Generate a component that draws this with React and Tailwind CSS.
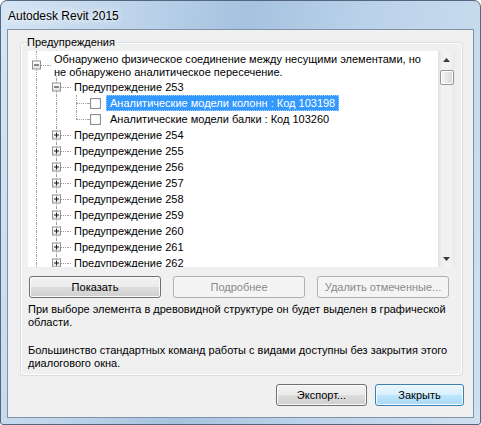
import React from "react"

const dot = "border-dotted border-[#a0a0a0]"

// one 20px indentation column of the tree, with its guide lines
const Col = ({ up, down, right, box }) => (
  <div className="relative w-5 shrink-0 self-stretch">
    {up && <div className={`absolute left-[8px] top-0 h-1/2 border-l ${dot}`} />}
    {down && <div className={`absolute left-[8px] top-1/2 bottom-0 border-l ${dot}`} />}
    {right && <div className={`absolute left-[8px] right-0 top-1/2 border-t ${dot}`} />}
    {box && (
      <div className="absolute left-[4px] top-1/2 -translate-y-1/2 w-[9px] h-[9px] border border-[#919191] bg-[linear-gradient(#ffffff,#e3e3e3)] flex items-center justify-center">
        <div className="relative w-[5px] h-[5px] flex items-center justify-center">
          <div className="w-[5px] h-px bg-[#1e1e1e]" />
          {box === "plus" && <div className="absolute left-[2px] top-0 w-px h-[5px] bg-[#1e1e1e]" />}
        </div>
      </div>
    )}
  </div>
)

const Ext = ({ w = 3 }) => (
  <div className="relative shrink-0 self-stretch" style={{ width: w }}>
    <div className={`absolute left-0 right-0 top-1/2 border-t ${dot}`} />
  </div>
)

const Checkbox = () => (
  <div className="w-[11px] h-[11px] shrink-0 border border-[#8e8f8f] bg-white shadow-[inset_0_0_0_1px_#f2f2f2]" />
)

const Warning = ({ n }) => (
  <div className="flex h-4 shrink-0 items-center leading-4">
    <Col up down />
    <Col up down right box="plus" />
    <Ext />
    <span className="pl-[3px] whitespace-nowrap">Предупреждение {n}</span>
  </div>
)

const Button = ({ children, kind = "normal", className = "" }) => {
  const styles = {
    normal:
      "border-[#707070] bg-[linear-gradient(#f2f2f2_0%,#ebebeb_50%,#dddddd_50%,#cfcfcf_100%)] shadow-[inset_0_0_0_1px_#fbfbfb] text-black",
    disabled: "border-[#adb2b5] bg-[#f4f4f4] text-[#8a8a8a]",
    primary:
      "border-[#3c7fb1] bg-[linear-gradient(#eaf6fd_0%,#d9f0fc_50%,#bee6fd_50%,#a7d9f5_100%)] shadow-[inset_0_0_0_1px_#f4fbff] text-black",
  }
  return (
    <div
      className={`h-[22px] rounded-[3px] border flex items-center justify-center whitespace-nowrap ${styles[kind]} ${className}`}
    >
      {children}
    </div>
  )
}

const Scrollbar = () => (
  <div className="w-[17px] shrink-0 flex flex-col items-center bg-[linear-gradient(to_right,#e2e2e2,#f1f1f1_25%,#f1f1f1_75%,#e9e9e9)]">
    <div className="h-[17px] w-full flex items-center justify-center">
      <svg width="7" height="4" viewBox="0 0 7 4">
        <path d="M3.5 0 L7 4 L0 4 Z" fill="#3a3a3a" />
      </svg>
    </div>
    <div className="mt-[2px] w-[14px] h-[15px] rounded-[2px] border border-[#979797] bg-[linear-gradient(to_right,#f6f6f6,#e6e6e6_50%,#d8d8d8)] shadow-[inset_0_0_0_1px_#fdfdfd]" />
    <div className="flex-1" />
    <div className="h-[17px] w-full flex items-center justify-center">
      <svg width="7" height="4" viewBox="0 0 7 4">
        <path d="M0 0 L7 0 L3.5 4 Z" fill="#3a3a3a" />
      </svg>
    </div>
  </div>
)

const App = () => {
  return (
    <div className="w-[481px] h-[425px] font-['Liberation_Sans',Arial,sans-serif] text-[11px] text-black bg-white">
      <div className="w-full h-full rounded-t-[7px] rounded-b-[3px] border border-[#55677c] px-[6px] pb-[6px] flex flex-col bg-[linear-gradient(100deg,#d5e5f4_0%,#bcd3ea_25%,#a6c2df_45%,#b9d1e9_65%,#cfe0f1_100%)]">
        {/* Title bar */}
        <div className="h-[28px] shrink-0 flex items-center pl-[1px] pt-[1px] text-[12px] [text-shadow:0_0_6px_#ffffff,0_0_10px_#ffffff]">
          Autodesk Revit 2015
        </div>

        {/* Client area */}
        <div className="flex-1 min-h-0 border border-[#7f92a8] bg-[#f0f0f0] flex flex-col">
          {/* Group box */}
          <div className="relative mt-[12px] ml-[12px] mr-[10px] rounded-[3px] border border-[#d5dfe5] pt-[8px] px-[7px] pb-[5px] shadow-[inset_0_0_0_1px_#fdfdfd]">
            <span className="absolute left-[5px] top-[-7px] px-[1px] leading-[13px] bg-[#f0f0f0]">
              Предупреждения
            </span>

            {/* Tree view */}
            <div className="h-[216px] flex bg-white">
              <div className="flex-1 flex flex-col overflow-hidden">
                <div className="relative flex h-[28px] shrink-0">
                  <Col up down right box="minus" />
                  <Ext />
                  <span className="pl-[3px] pt-[2px] leading-[13px] whitespace-nowrap">
                    Обнаружено физическое соединение между несущими элементами, но
                    <br />
                    не обнаружено аналитическое пересечение.
                  </span>
                  <div className={`absolute left-[28px] bottom-0 h-[3px] border-l ${dot}`} />
                </div>
                <div className="flex h-4 shrink-0 items-center leading-4">
                  <Col up down />
                  <Col up down right box="minus" />
                  <Ext />
                  <span className="pl-[3px] whitespace-nowrap">Предупреждение 253</span>
                </div>
                <div className="flex h-4 shrink-0 items-center">
                  <Col up down />
                  <Col up down />
                  <Col up down right />
                  <Ext w={2} />
                  <Checkbox />
                  <span className="ml-[5px] h-[16px] px-[3px] leading-[14px] whitespace-nowrap bg-[#3399ff] text-white border border-dotted border-[#a9d2ff]">
                    Аналитические модели колонн : Код 103198
                  </span>
                </div>
                <div className="flex h-4 shrink-0 items-center">
                  <Col up down />
                  <Col up down />
                  <Col up right />
                  <Ext w={2} />
                  <Checkbox />
                  <span className="ml-[6px] px-[3px] leading-4 whitespace-nowrap">
                    Аналитические модели балки : Код 103260
                  </span>
                </div>
                {[254, 255, 256, 257, 258, 259, 260, 261, 262].map((n) => (
                  <Warning key={n} n={n} />
                ))}
              </div>
              <Scrollbar />
            </div>

            {/* Action buttons */}
            <div className="mt-[9px] ml-[1px] flex gap-3">
              <Button className="w-[132px]">Показать</Button>
              <Button kind="disabled" className="w-[132px]">Подробнее</Button>
              <Button kind="disabled" className="w-[132px]">Удалить отмеченные...</Button>
            </div>

            <p className="mt-[5px] leading-[13px]">
              При выборе элемента в древовидной структуре он будет выделен в графической
              <br />
              области.
            </p>
            <p className="mt-[15px] leading-[13px]">
              Большинство стандартных команд работы с видами доступны без закрытия этого
              <br />
              диалогового окна.
            </p>
          </div>

          {/* Dialog buttons */}
          <div className="mt-[8px] mr-[9px] flex justify-end gap-2">
            <Button className="w-[91px]">Экспорт...</Button>
            <Button kind="primary" className="w-[89px]">Закрыть</Button>
          </div>
        </div>
      </div>
    </div>
  )
}

export default App
